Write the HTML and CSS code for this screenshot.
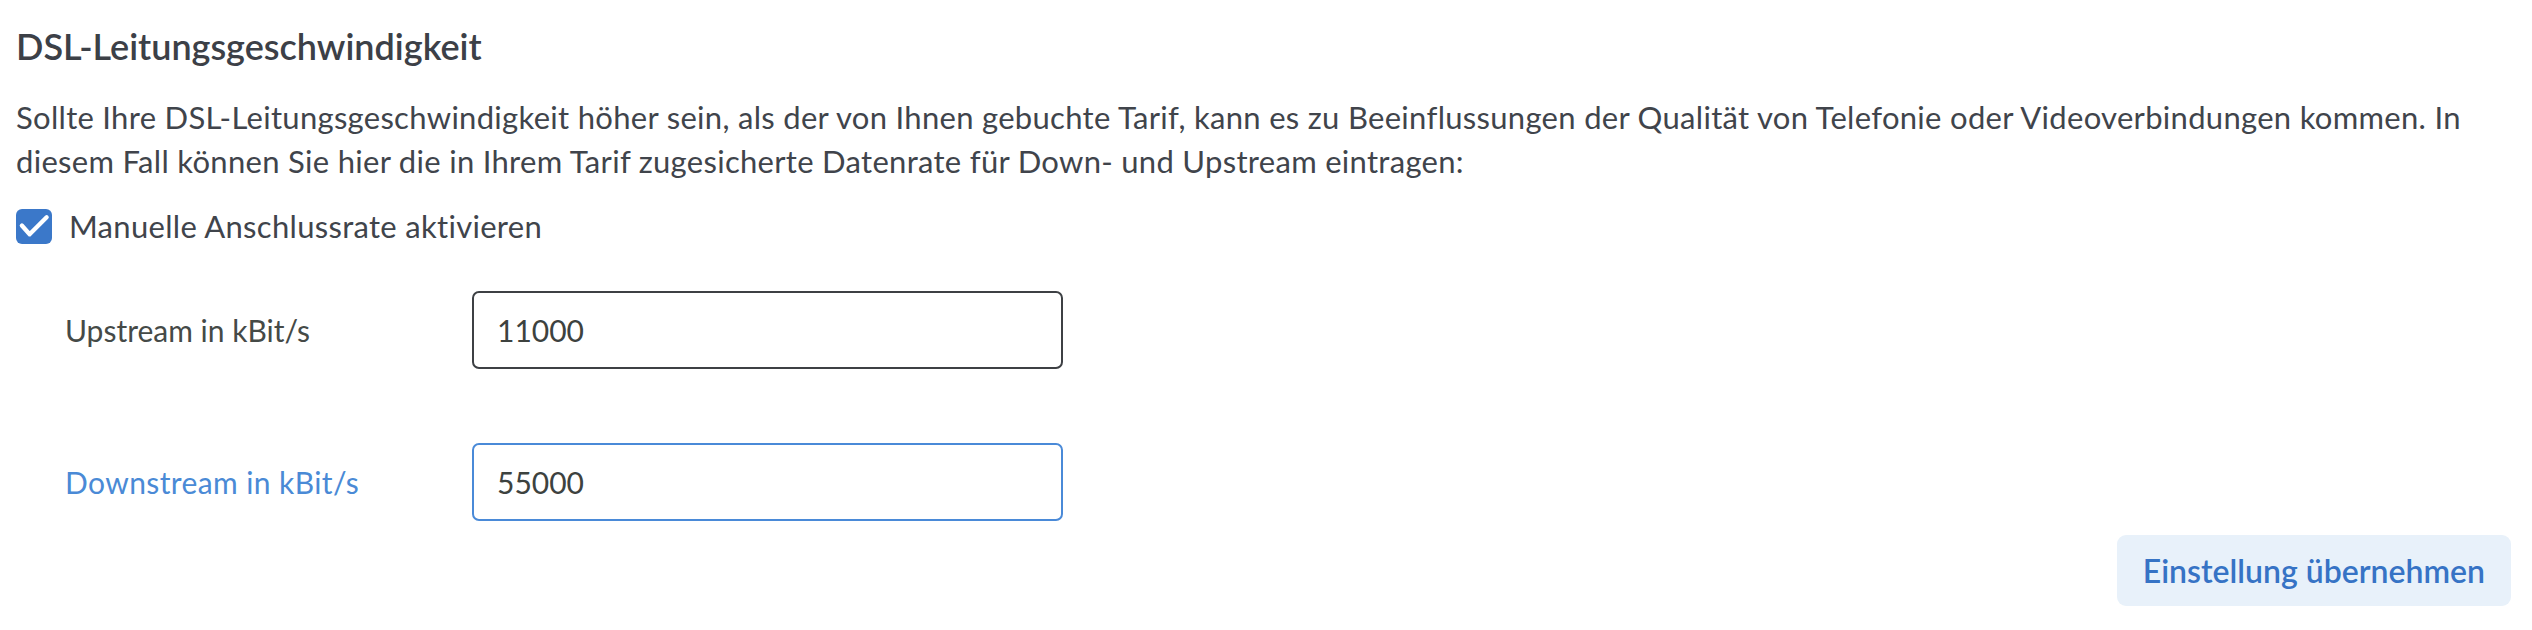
FILE: index.html
```html
<!DOCTYPE html>
<html lang="de">
<head>
<meta charset="utf-8">
<title>DSL-Leitungsgeschwindigkeit</title>
<link rel="stylesheet" href="styles.css">
</head>
<body>
<main class="page">
  <h2 class="title">DSL-Leitungsgeschwindigkeit</h2>
  <p class="intro">Sollte Ihre DSL-Leitungsgeschwindigkeit höher sein, als der von Ihnen gebuchte Tarif, kann es zu Beeinflussungen der Qualität von Telefonie oder Videoverbindungen kommen. In diesem Fall können Sie hier die in Ihrem Tarif zugesicherte Datenrate für Down- und Upstream eintragen:</p>
  <label class="check">
    <span class="check-box">
      <svg viewBox="0 0 36 36" width="36" height="35" aria-hidden="true"><path d="M5.5 17 L13.5 26 L31 8.5" fill="none" stroke="#ffffff" stroke-width="4.4" stroke-linecap="round" stroke-linejoin="round"/></svg>
    </span>
    <span class="check-label">Manuelle Anschlussrate aktivieren</span>
  </label>
  <div class="form">
    <div class="row">
      <span class="row-label">Upstream in kBit/s</span>
      <input class="field" type="text" value="11000">
    </div>
    <div class="row">
      <span class="row-label row-label-active">Downstream in kBit/s</span>
      <input class="field field-active" type="text" value="55000">
    </div>
  </div>
  <div class="actions">
    <button class="btn" type="button">Einstellung übernehmen</button>
  </div>
</main>
</body>
</html>
```
FILE: styles.css
```css
html, body {
  margin: 0;
  padding: 0;
  background: #ffffff;
}
body {
  font-family: Lato, "Open Sans", sans-serif;
  color: #40444b;
}
.page {
  padding: 22px 21px 0 16px;
}
.title {
  margin: 0;
  font-size: 36px;
  line-height: 48px;
  font-weight: 600;
  color: #3c4047;
}
.intro {
  margin: 25px 0 0 0;
  font-size: 31px;
  line-height: 44px;
  letter-spacing: 0.3px;
  color: #40444b;
}
.check {
  margin-top: 25px;
  display: flex;
  align-items: center;
  height: 36px;
  gap: 17px;
}
.check-box {
  width: 36px;
  height: 35px;
  border-radius: 6px;
  background: #3b78c9;
  display: flex;
  align-items: center;
  justify-content: center;
}
.check-box svg {
  display: block;
}
.check-label {
  font-size: 31px;
  line-height: 36px;
  letter-spacing: 0.3px;
  color: #40444b;
}
.form {
  margin-top: 47px;
  padding-left: 49px;
  display: flex;
  flex-direction: column;
  gap: 74px;
}
.row {
  display: grid;
  grid-template-columns: 407px 591px;
  align-items: center;
}
.row-label {
  font-size: 30px;
  line-height: 36px;
  color: #454a47;
}
.row-label-active {
  color: #4a8ad6;
  letter-spacing: 0.4px;
}
.field {
  box-sizing: border-box;
  width: 591px;
  height: 78px;
  margin: 0;
  padding: 0 23px;
  border: 2px solid #3d4044;
  border-radius: 7px;
  font-family: Lato, "Open Sans", sans-serif;
  font-size: 30px;
  color: #3d423f;
  background: #ffffff;
  outline: none;
}
.field-active {
  border-color: #4a8ad8;
}
.actions {
  display: flex;
  justify-content: flex-end;
  margin-top: 14px;
}
.btn {
  height: 71px;
  padding: 0 26px;
  border: none;
  border-radius: 9px;
  background: #e8f1fa;
  color: #3673c5;
  font-family: Lato, "Open Sans", sans-serif;
  font-size: 32px;
  font-weight: 600;
  cursor: pointer;
}
```
